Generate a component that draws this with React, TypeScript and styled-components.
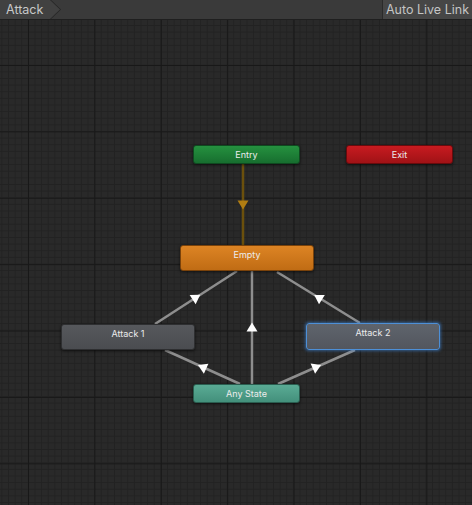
import styled, { createGlobalStyle } from 'styled-components';

const GlobalStyle = createGlobalStyle`
    html, body {
        margin: 0;
        padding: 0;
        background: #282828;
    }
    body {
        font-family: Inter, 'Noto Sans', sans-serif;
    }
`;

const Window = styled.div`
    width: 472px;
    height: 505px;
    display: flex;
    flex-direction: column;
    overflow: hidden;
`;

const Toolbar = styled.div`
    height: 19px;
    flex-shrink: 0;
    display: flex;
    align-items: stretch;
    justify-content: space-between;
    background: #3a3a3a;
    border-bottom: 1px solid #1f1f1f;
`;

const Crumb = styled.div`
    position: relative;
    width: 61px;
    background: #252525;
    clip-path: polygon(0 0, 51px 0, 61px 50%, 51px 100%, 0 100%);
`;

const CrumbInner = styled.div`
    height: 100%;
    display: flex;
    align-items: center;
    padding-left: 6px;
    background: #414141;
    color: #c8c8c8;
    font-size: 12.5px;
    clip-path: polygon(0 0, 50px 0, 60px 50%, 50px 100%, 0 100%);
`;

const ToolButton = styled.div`
    width: 89px;
    display: flex;
    align-items: center;
    justify-content: center;
    background: #464646;
    border-left: 1px solid #2a2a2a;
    color: #c4c4c4;
    font-size: 12.5px;
    white-space: nowrap;
`;

const Canvas = styled.div`
    position: relative;
    flex: 1;
    background-color: #292929;
    background-image:
        linear-gradient(to right, #181818 1px, transparent 1px),
        linear-gradient(to bottom, #181818 1px, transparent 1px),
        linear-gradient(to right, #222222 1px, transparent 1px),
        linear-gradient(to bottom, #222222 1px, transparent 1px);
    background-size: 66.4px 66.4px, 66.4px 66.4px, 6.64px 6.64px, 6.64px 6.64px;
    background-position: 28px 0, 0 45px, 1.4px 0, 0 5px;
`;

const Links = styled.svg`
    position: absolute;
    inset: 0;
    width: 100%;
    height: 100%;
`;

type Tone = 'entry' | 'exit' | 'default' | 'state' | 'selected' | 'any';

const tones: Record<Tone, { top: string; bottom: string; border: string }> = {
    entry: { top: '#25913f', bottom: '#176e2f', border: '#0f4a20' },
    exit: { top: '#c81b20', bottom: '#a01216', border: '#6a0a0c' },
    default: { top: '#dd8424', bottom: '#c06c14', border: '#7a420a' },
    state: { top: '#56585c', bottom: '#4a4c50', border: '#2e2f31' },
    selected: { top: '#5f646c', bottom: '#52565e', border: '#4d8fd6' },
    any: { top: '#5aab95', bottom: '#43907b', border: '#2a5e50' },
};

const Node = styled.div<{ $tone: Tone }>`
    position: absolute;
    display: flex;
    align-items: flex-start;
    justify-content: center;
    box-sizing: border-box;
    border-radius: 3px;
    background: linear-gradient(
        ${(p) => tones[p.$tone].top},
        ${(p) => tones[p.$tone].bottom}
    );
    border: 1px solid ${(p) => tones[p.$tone].border};
    box-shadow: ${(p) =>
        p.$tone === 'selected'
            ? '0 0 3px 1px rgba(60, 130, 210, 0.6)'
            : '0 1px 3px rgba(0, 0, 0, 0.6)'};
    color: #ececec;
    font-size: 9px;
    line-height: 17px;
`;

type Link = { from: [number, number]; to: [number, number]; color: string; head: string };

// canvas coords (page y - 20)
const links: Link[] = [
    { from: [243, 144], to: [243, 225], color: '#6b500c', head: '#b07d12' },
    { from: [155, 304], to: [237, 251], color: '#8e8e8e', head: '#ffffff' },
    { from: [360, 303], to: [277, 252], color: '#8e8e8e', head: '#ffffff' },
    { from: [252, 364], to: [252, 251], color: '#8e8e8e', head: '#ffffff' },
    { from: [240, 364], to: [165, 330], color: '#8e8e8e', head: '#ffffff' },
    { from: [278, 364], to: [355, 330], color: '#8e8e8e', head: '#ffffff' },
];

const Arrow = ({ link }: { link: Link }) => {
    const [x1, y1] = link.from;
    const [x2, y2] = link.to;
    const mx = (x1 + x2) / 2;
    const my = (y1 + y2) / 2;
    const angle = (Math.atan2(y2 - y1, x2 - x1) * 180) / Math.PI;
    return (
        <g>
            <line x1={x1} y1={y1} x2={x2} y2={y2} stroke={link.color} strokeWidth={2.5} />
            <polygon
                points="5,0 -4,-5.5 -4,5.5"
                fill={link.head}
                transform={`translate(${mx} ${my}) rotate(${angle})`}
            />
        </g>
    );
};

const states = [
    { name: 'Entry', tone: 'entry' as Tone, x: 193, y: 125, w: 107, h: 19 },
    { name: 'Exit', tone: 'exit' as Tone, x: 346, y: 125, w: 107, h: 19 },
    { name: 'Empty', tone: 'default' as Tone, x: 180, y: 225, w: 134, h: 26 },
    { name: 'Attack 1', tone: 'state' as Tone, x: 61, y: 304, w: 134, h: 26 },
    { name: 'Attack 2', tone: 'selected' as Tone, x: 306, y: 303, w: 134, h: 27 },
    { name: 'Any State', tone: 'any' as Tone, x: 193, y: 364, w: 107, h: 19 },
];

const App = () => {
    return (
        <>
            <GlobalStyle />
            <Window>
                <Toolbar>
                    <Crumb>
                        <CrumbInner>Attack</CrumbInner>
                    </Crumb>
                    <ToolButton>Auto Live Link</ToolButton>
                </Toolbar>
                <Canvas>
                    <Links>
                        {links.map((l, i) => (
                            <Arrow key={i} link={l} />
                        ))}
                    </Links>
                    {states.map((s) => (
                        <Node
                            key={s.name}
                            $tone={s.tone}
                            style={{ left: s.x, top: s.y, width: s.w, height: s.h }}
                        >
                            {s.name}
                        </Node>
                    ))}
                </Canvas>
            </Window>
        </>
    );
};

export default App;
